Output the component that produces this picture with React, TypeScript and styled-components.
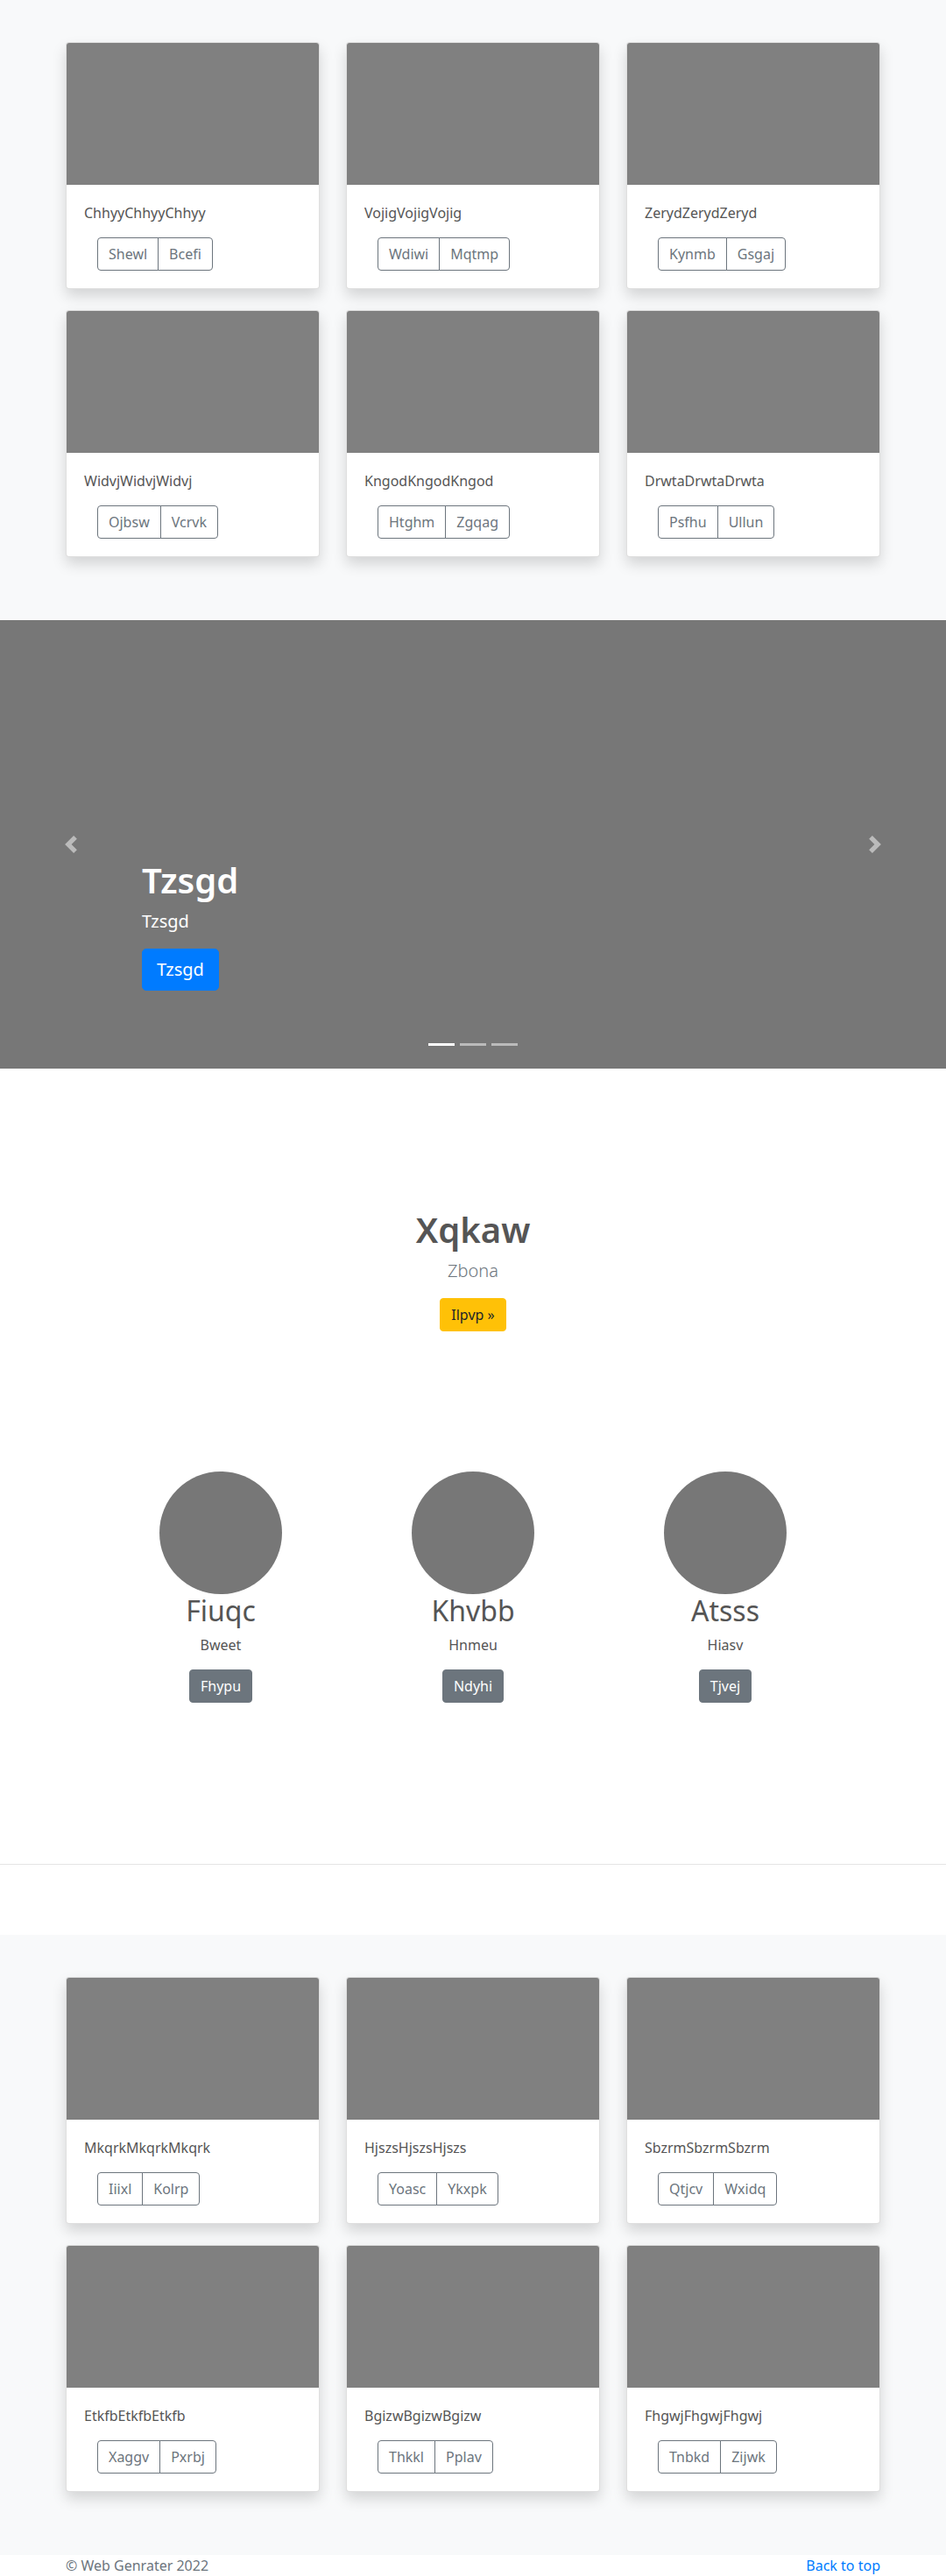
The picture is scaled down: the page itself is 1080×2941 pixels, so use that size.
import React from "react";
import styled, { createGlobalStyle } from "styled-components";

const GlobalStyle = createGlobalStyle`
  html, body { margin: 0; padding: 0; }
  *, *::before, *::after { box-sizing: border-box; }
  body {
    font-family: "Segoe UI", "Noto Sans", "Open Sans", sans-serif;
    font-size: 16px;
    line-height: 1.5;
    color: #555;
    background: #fff;
  }
`;

type CardData = { title: string; actions: [string, string] };

const albumOne: CardData[] = [
  { title: "ChhyyChhyyChhyy", actions: ["Shewl", "Bcefi"] },
  { title: "VojigVojigVojig", actions: ["Wdiwi", "Mqtmp"] },
  { title: "ZerydZerydZeryd", actions: ["Kynmb", "Gsgaj"] },
  { title: "WidvjWidvjWidvj", actions: ["Ojbsw", "Vcrvk"] },
  { title: "KngodKngodKngod", actions: ["Htghm", "Zgqag"] },
  { title: "DrwtaDrwtaDrwta", actions: ["Psfhu", "Ullun"] },
];

const albumTwo: CardData[] = [
  { title: "MkqrkMkqrkMkqrk", actions: ["Iiixl", "Kolrp"] },
  { title: "HjszsHjszsHjszs", actions: ["Yoasc", "Ykxpk"] },
  { title: "SbzrmSbzrmSbzrm", actions: ["Qtjcv", "Wxidq"] },
  { title: "EtkfbEtkfbEtkfb", actions: ["Xaggv", "Pxrbj"] },
  { title: "BgizwBgizwBgizw", actions: ["Thkkl", "Pplav"] },
  { title: "FhgwjFhgwjFhgwj", actions: ["Tnbkd", "Zijwk"] },
];

const features = [
  { title: "Fiuqc", text: "Bweet", action: "Fhypu" },
  { title: "Khvbb", text: "Hnmeu", action: "Ndyhi" },
  { title: "Atsss", text: "Hiasv", action: "Tjvej" },
];

/* ---------- album ---------- */
const AlbumSection = styled.section`
  background: #f8f9fa;
  padding: 48px 0;
`;

const Container = styled.div`
  max-width: 960px;
  margin: 0 auto;
  padding: 0 15px;
`;

const CardGrid = styled.div`
  display: grid;
  grid-template-columns: repeat(3, 1fr);
  column-gap: 30px;
`;

const Card = styled.div`
  margin-bottom: 24px;
  background: #fff;
  border: 1px solid rgba(0, 0, 0, 0.125);
  border-radius: 4px;
  overflow: hidden;
  box-shadow: 0 8px 16px rgba(0, 0, 0, 0.15);
`;

const CardImage = styled.div`
  height: 162px;
  background: #808080;
`;

const CardBody = styled.div`
  padding: 20px;
`;

const CardText = styled.p`
  margin: 0 0 16px;
  line-height: 24px;
  color: #555;
`;

const ButtonGroup = styled.div`
  display: flex;
  margin-left: 15px;
`;

const OutlineButton = styled.button`
  font: inherit;
  font-size: 16px;
  line-height: 24px;
  padding: 6px 12px;
  background: transparent;
  color: #6c757d;
  border: 1px solid #6c757d;
  border-radius: 0;
  cursor: pointer;
  &:first-child {
    border-radius: 4px 0 0 4px;
  }
  & + & {
    margin-left: -1px;
    border-radius: 0 4px 4px 0;
  }
`;

/* ---------- carousel ---------- */
const Carousel = styled.section`
  position: relative;
  height: 512px;
  background: #777;
  display: flex;
  align-items: flex-end;
  padding: 0 15% 89px;
  color: #fff;
`;

const Caption = styled.div`
  display: flex;
  flex-direction: column;
  align-items: flex-start;
`;

const CaptionTitle = styled.h1`
  margin: 0 0 8px;
  font-size: 40px;
  line-height: 48px;
  font-weight: 600;
  color: #fff;
`;

const CaptionText = styled.p`
  margin: 0 0 16px;
  font-size: 20px;
  line-height: 30px;
`;

const PrimaryButton = styled.a`
  display: inline-block;
  padding: 8px 16px;
  font-size: 20px;
  line-height: 30px;
  color: #fff;
  background: #007bff;
  border: 1px solid #007bff;
  border-radius: 5px;
  text-decoration: none;
`;

const Control = styled.a<{ $side: "left" | "right" }>`
  position: absolute;
  top: 0;
  bottom: 0;
  ${(p) => p.$side}: 0;
  width: 15%;
  display: flex;
  align-items: center;
  justify-content: center;
  opacity: 0.5;
`;

const Indicators = styled.ol`
  position: absolute;
  left: 0;
  right: 0;
  bottom: 26px;
  margin: 0;
  padding: 0;
  list-style: none;
  display: flex;
  justify-content: center;
  gap: 6px;
`;

const Indicator = styled.li<{ $active?: boolean }>`
  width: 30px;
  height: 3px;
  background: #fff;
  opacity: ${(p) => (p.$active ? 1 : 0.5)};
`;

/* ---------- intro ---------- */
const Intro = styled.section`
  padding: 160px 15px;
  text-align: center;
`;

const IntroTitle = styled.h1`
  margin: 0 0 8px;
  font-size: 40px;
  line-height: 48px;
  font-weight: 600;
  color: #555;
`;

const Lead = styled.p`
  margin: 0 0 16px;
  font-size: 20px;
  line-height: 30px;
  font-weight: 300;
  color: #6c757d;
`;

const ActionRow = styled.div`
  display: flex;
  justify-content: center;
`;

const WarningButton = styled.a`
  display: inline-block;
  padding: 6px 12px;
  line-height: 24px;
  color: #212529;
  background: #ffc107;
  border: 1px solid #ffc107;
  border-radius: 4px;
  text-decoration: none;
`;

/* ---------- marketing ---------- */
const Marketing = styled.section`
  width: 80%;
  margin: 0 auto;
  padding-bottom: 104px;
  display: grid;
  grid-template-columns: repeat(3, 1fr);
`;

const Feature = styled.div`
  display: flex;
  flex-direction: column;
  align-items: center;
  text-align: center;
`;

const Avatar = styled.div`
  width: 140px;
  height: 140px;
  border-radius: 50%;
  background: #777;
`;

const FeatureTitle = styled.h2`
  margin: 0 0 8px;
  font-size: 32px;
  line-height: 38px;
  font-weight: 400;
  color: #555;
`;

const FeatureText = styled.p`
  margin: 0 0 16px;
  line-height: 24px;
  color: #555;
`;

const SecondaryButton = styled.a`
  display: inline-block;
  padding: 6px 12px;
  line-height: 24px;
  color: #fff;
  background: #6c757d;
  border: 1px solid #6c757d;
  border-radius: 4px;
  text-decoration: none;
`;

const Divider = styled.hr`
  margin: 80px 0;
  border: 0;
  border-top: 1px solid rgba(0, 0, 0, 0.1);
  height: 0;
`;

/* ---------- footer ---------- */
const Footer = styled.footer`
  max-width: 960px;
  margin: 0 auto;
  padding: 0 15px;
  display: flex;
  justify-content: space-between;
  line-height: 24px;
  color: #6c757d;
`;

const FooterLink = styled.a`
  color: #007bff;
  text-decoration: none;
`;

const Chevron = ({ dir }: { dir: "prev" | "next" }) => (
  <svg width="20" height="20" viewBox="0 0 8 8" fill="#fff">
    {dir === "prev" ? (
      <path d="M5.25 0l-4 4 4 4 1.5-1.5L4.25 4l2.5-2.5L5.25 0z" />
    ) : (
      <path d="M2.75 0l-1.5 1.5L3.75 4l-2.5 2.5L2.75 8l4-4-4-4z" />
    )}
  </svg>
);

const Album = ({ cards }: { cards: CardData[] }) => (
  <AlbumSection>
    <Container>
      <CardGrid>
        {cards.map((c) => (
          <Card key={c.title}>
            <CardImage />
            <CardBody>
              <CardText>{c.title}</CardText>
              <ButtonGroup>
                <OutlineButton>{c.actions[0]}</OutlineButton>
                <OutlineButton>{c.actions[1]}</OutlineButton>
              </ButtonGroup>
            </CardBody>
          </Card>
        ))}
      </CardGrid>
    </Container>
  </AlbumSection>
);

export default function App() {
  return (
    <>
      <GlobalStyle />
      <Album cards={albumOne} />

      <Carousel>
        <Caption>
          <CaptionTitle>Tzsgd</CaptionTitle>
          <CaptionText>Tzsgd</CaptionText>
          <PrimaryButton href="#">Tzsgd</PrimaryButton>
        </Caption>
        <Control $side="left" href="#">
          <Chevron dir="prev" />
        </Control>
        <Control $side="right" href="#">
          <Chevron dir="next" />
        </Control>
        <Indicators>
          <Indicator $active />
          <Indicator />
          <Indicator />
        </Indicators>
      </Carousel>

      <Intro>
        <IntroTitle>Xqkaw</IntroTitle>
        <Lead>Zbona</Lead>
        <ActionRow>
          <WarningButton href="#">Ilpvp »</WarningButton>
        </ActionRow>
      </Intro>

      <Marketing>
        {features.map((f) => (
          <Feature key={f.title}>
            <Avatar />
            <FeatureTitle>{f.title}</FeatureTitle>
            <FeatureText>{f.text}</FeatureText>
            <SecondaryButton href="#">{f.action}</SecondaryButton>
          </Feature>
        ))}
      </Marketing>

      <Divider />

      <Album cards={albumTwo} />

      <Footer>
        <span>© Web Genrater 2022</span>
        <FooterLink href="#">Back to top</FooterLink>
      </Footer>
    </>
  );
}
